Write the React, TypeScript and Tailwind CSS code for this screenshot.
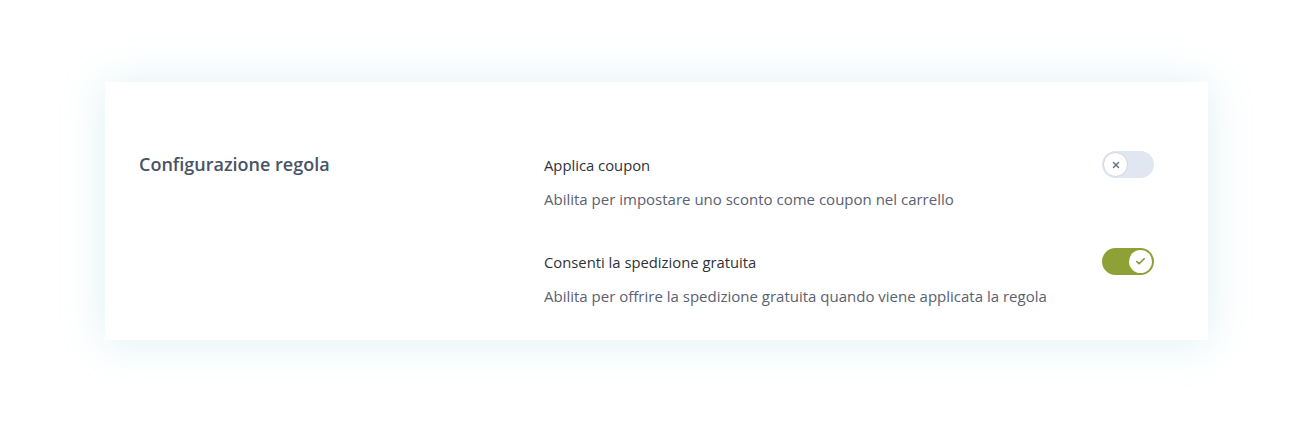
import { Check, X } from "lucide-react";

type ToggleProps = { on: boolean };

const Toggle = ({ on }: ToggleProps) => (
  <button
    type="button"
    role="switch"
    aria-checked={on}
    className={
      on
        ? "relative flex h-[27px] w-[52px] shrink-0 items-center justify-end rounded-full bg-[#8ea137] px-[2px]"
        : "relative flex h-[27px] w-[52px] shrink-0 items-center justify-start rounded-full bg-[#e1e7f1] px-[1px]"
    }
  >
    {on ? (
      <span className="flex h-[23px] w-[23px] items-center justify-center rounded-full bg-white">
        <Check className="h-[11px] w-[11px] text-[#7f9130]" strokeWidth={3.5} />
      </span>
    ) : (
      <span className="flex h-[25px] w-[25px] items-center justify-center rounded-full border border-[#cfd6e0] bg-white">
        <X className="h-[10px] w-[10px] text-[#6b7280]" strokeWidth={3.5} />
      </span>
    )}
  </button>
);

const settings = [
  {
    label: "Applica coupon",
    help: "Abilita per impostare uno sconto come coupon nel carrello",
    on: false,
  },
  {
    label: "Consenti la spedizione gratuita",
    help: "Abilita per offrire la spedizione gratuita quando viene applicata la regola",
    on: true,
  },
];

const App = () => {
  return (
    <div
      className="min-h-[423px] bg-white pt-[82px] pl-[105px]"
      style={{ fontFamily: '"Open Sans", "Noto Sans", sans-serif' }}
    >
      <section className="flex w-[1103px] bg-white pt-[69px] pb-[34px] pl-[34px] pr-[54px] shadow-[0_2px_40px_rgba(140,200,215,0.28)]">
        <h2 className="w-[405px] shrink-0 pt-[1px] text-[18px] leading-[24px] font-semibold text-[#4a5365]">
          Configurazione regola
        </h2>

        <div className="flex flex-1 flex-col gap-[39px]">
          {settings.map((s) => (
            <div key={s.label} className="flex items-start justify-between">
              <div>
                <div className="text-[14.8px] leading-[28px] text-[#2f3237]">{s.label}</div>
                <p className="mt-[10px] text-[15px] leading-[20px] text-[#5a6170]">{s.help}</p>
              </div>
              <Toggle on={s.on} />
            </div>
          ))}
        </div>
      </section>
    </div>
  );
};

export default App;
